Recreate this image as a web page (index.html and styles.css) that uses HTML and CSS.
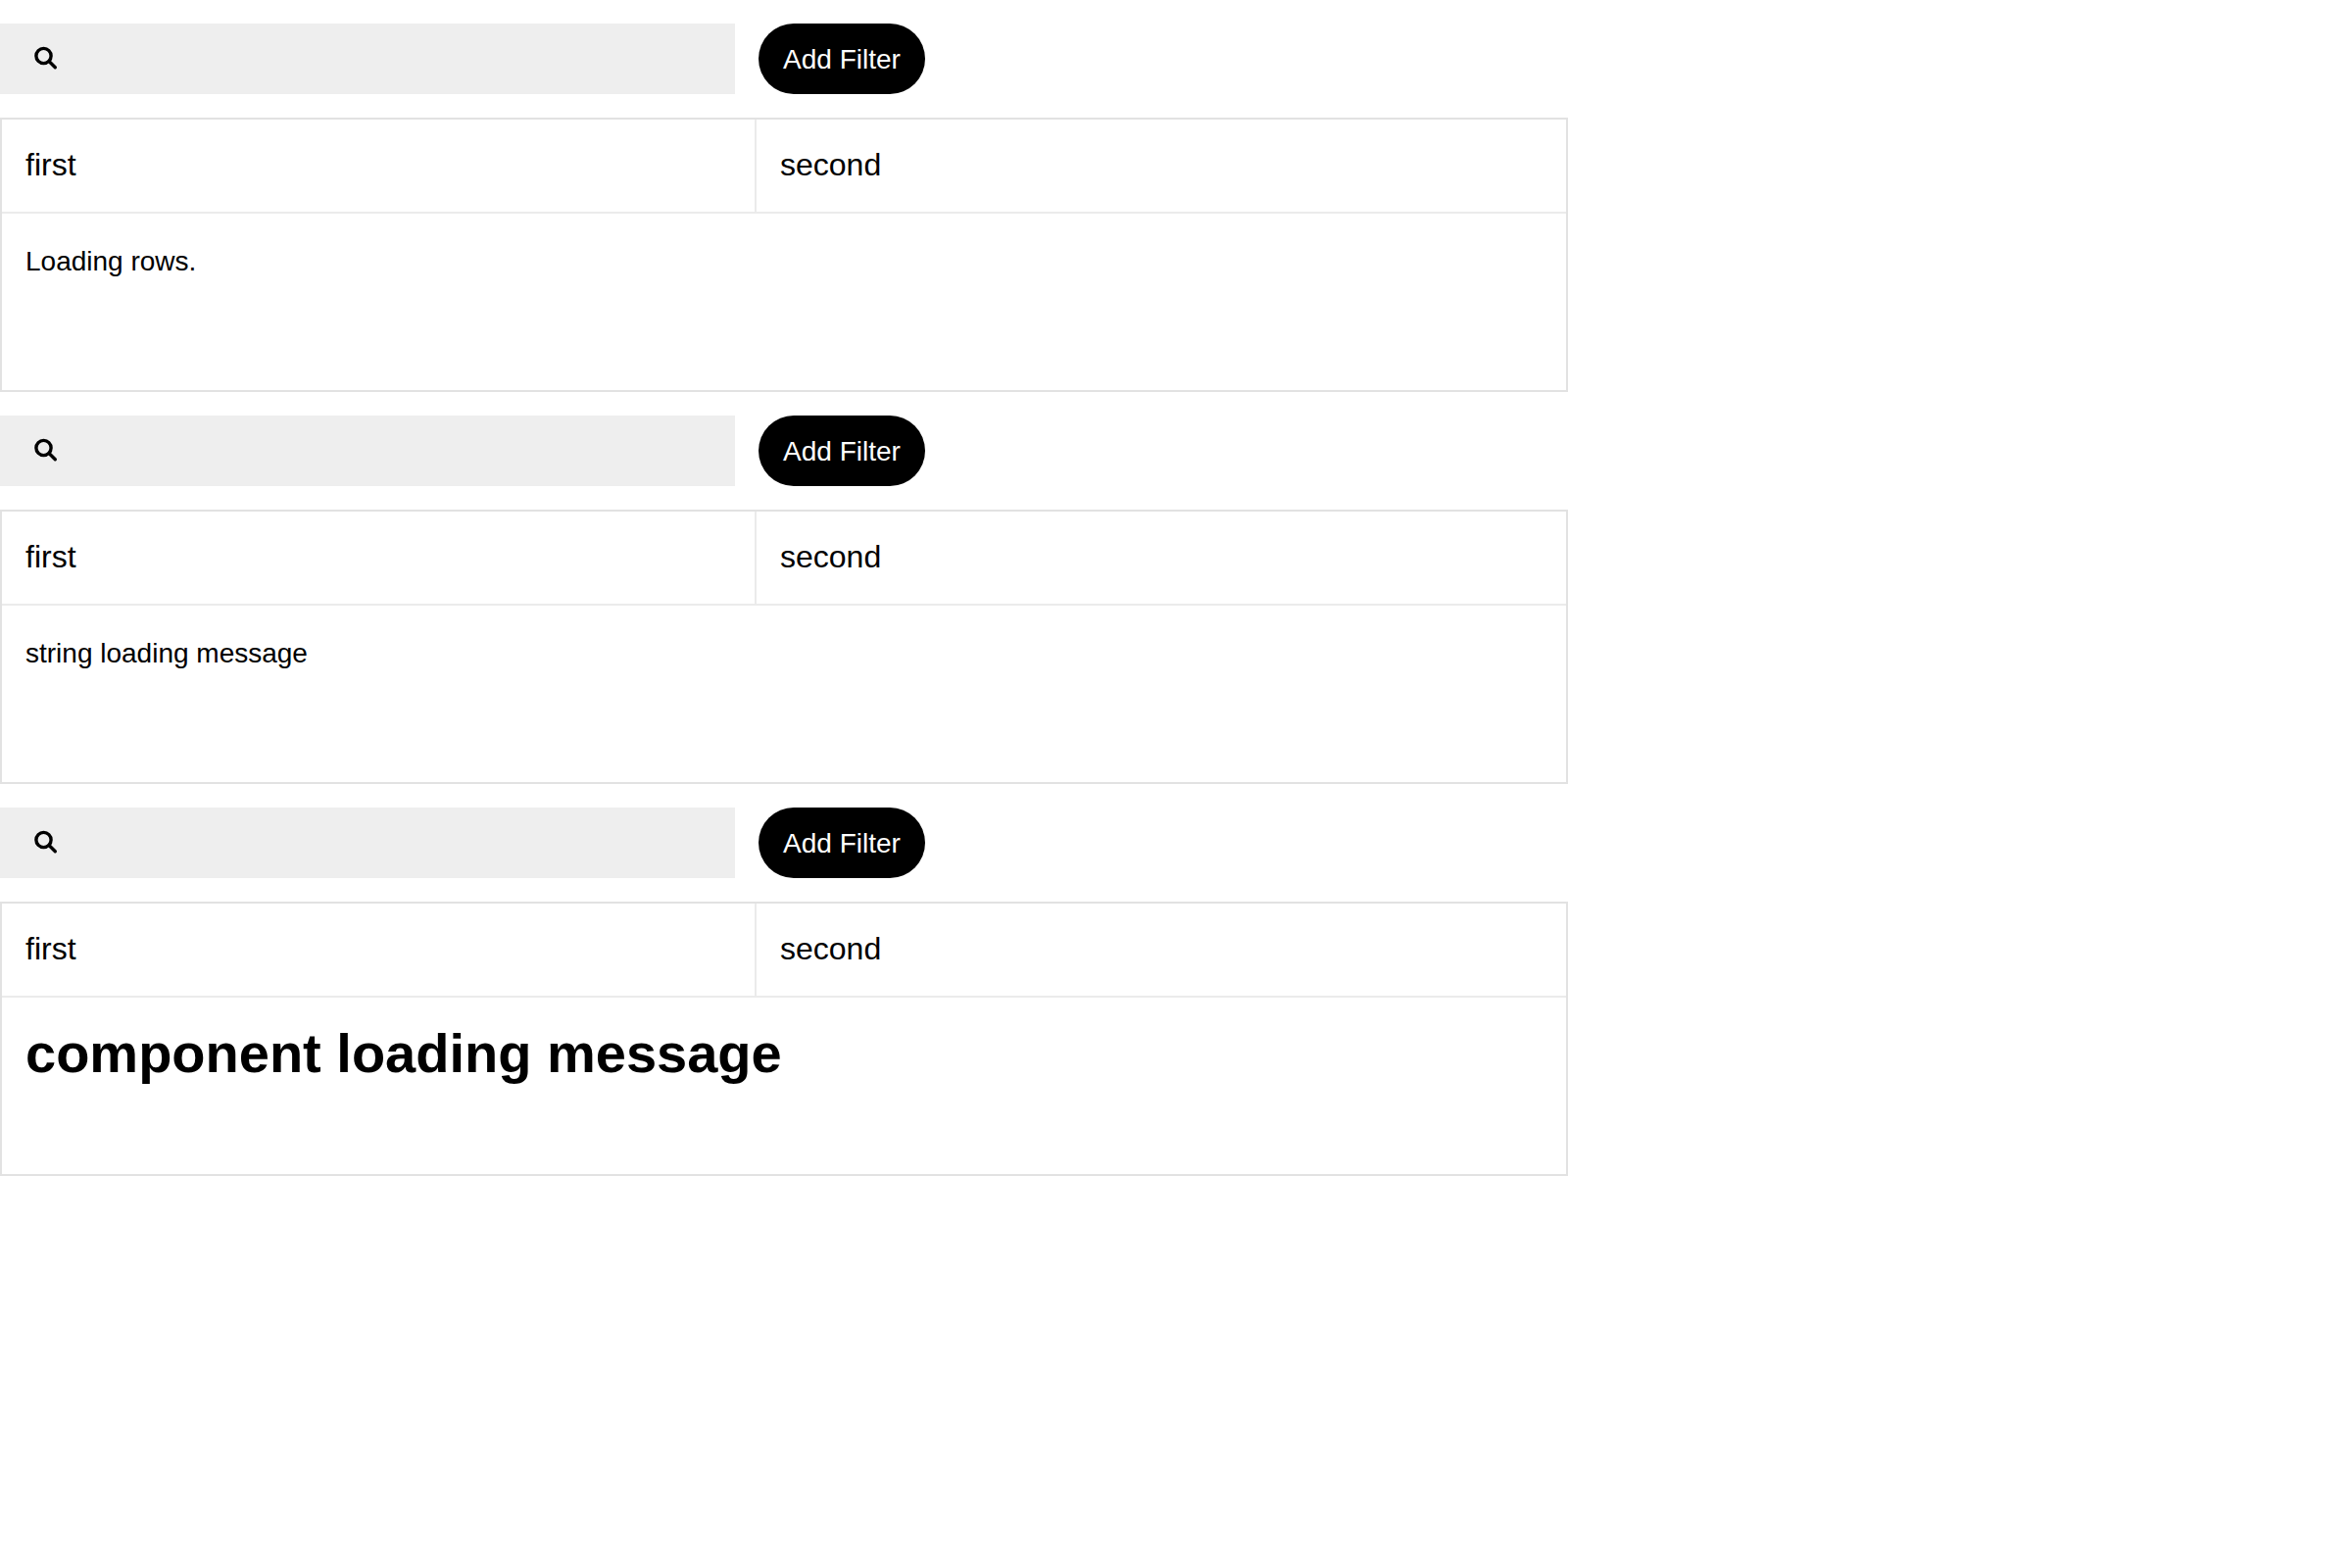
FILE: index.html
```html
<!DOCTYPE html>
<html lang="en">
<head>
  <meta charset="utf-8">
  <title>Data table loading states</title>
  <link rel="stylesheet" href="styles.css">
</head>
<body>
  <main class="page">
    <section class="panel">
      <div class="toolbar">
        <label class="search">
          <svg class="search-icon" viewBox="0 0 32 32" aria-hidden="true"><circle cx="16.5" cy="13" r="7.6"/><path d="M22 18.5 28.3 24.8"/></svg>
          <input class="search-input" type="text" aria-label="Search by text">
        </label>
        <button class="filter-button" type="button">Add Filter</button>
      </div>
      <table class="data-table">
        <thead><tr><th class="head-cell head-first" scope="col">first</th><th class="head-cell" scope="col">second</th></tr></thead>
        <tbody><tr><td class="message-cell" colspan="2">Loading rows.</td></tr></tbody>
      </table>
    </section>
    <section class="panel">
      <div class="toolbar">
        <label class="search">
          <svg class="search-icon" viewBox="0 0 32 32" aria-hidden="true"><circle cx="16.5" cy="13" r="7.6"/><path d="M22 18.5 28.3 24.8"/></svg>
          <input class="search-input" type="text" aria-label="Search by text">
        </label>
        <button class="filter-button" type="button">Add Filter</button>
      </div>
      <table class="data-table">
        <thead><tr><th class="head-cell head-first" scope="col">first</th><th class="head-cell" scope="col">second</th></tr></thead>
        <tbody><tr><td class="message-cell" colspan="2">string loading message</td></tr></tbody>
      </table>
    </section>
    <section class="panel">
      <div class="toolbar">
        <label class="search">
          <svg class="search-icon" viewBox="0 0 32 32" aria-hidden="true"><circle cx="16.5" cy="13" r="7.6"/><path d="M22 18.5 28.3 24.8"/></svg>
          <input class="search-input" type="text" aria-label="Search by text">
        </label>
        <button class="filter-button" type="button">Add Filter</button>
      </div>
      <table class="data-table">
        <thead><tr><th class="head-cell head-first" scope="col">first</th><th class="head-cell" scope="col">second</th></tr></thead>
        <tbody><tr><td class="message-cell" colspan="2"><h1 class="message-title">component loading message</h1></td></tr></tbody>
      </table>
    </section>
  </main>
</body>
</html>
```
FILE: styles.css
```css
* {
  box-sizing: border-box;
}

body {
  margin: 0;
  background: #fff;
  color: #000;
  font-family: "Liberation Sans", Arial, sans-serif;
  font-size: 28px;
  line-height: 50px;
}

.page {
  max-width: 1600px;
}

.toolbar {
  display: flex;
  gap: 24px;
  padding: 24px 0;
}

.search {
  display: flex;
  flex: 0 1 750px;
  align-items: center;
  gap: 16px;
  min-width: 0;
  padding: 0 28px;
  background: #eee;
}

.search-icon {
  flex: none;
  width: 32px;
  height: 32px;
  fill: none;
  stroke: #000;
  stroke-width: 3.4;
  stroke-linecap: round;
}

.search-input {
  flex: 1;
  min-width: 0;
  height: 72px;
  padding: 0;
  border: 0;
  outline: 0;
  background: transparent;
  font: inherit;
}

.filter-button {
  flex: none;
  min-width: 170px;
  padding: 12px 24px 10px;
  border: 0;
  border-radius: 36px;
  background: #000;
  color: #fff;
  font: inherit;
}

.data-table {
  width: 100%;
  border: 2px solid #e2e2e2;
  border-collapse: separate;
  border-spacing: 0;
  table-layout: fixed;
}

.head-cell {
  height: 96px;
  padding: 24px;
  border-bottom: 2px solid #ebebeb;
  font-size: 32px;
  font-weight: 400;
  line-height: 44px;
  text-align: left;
  vertical-align: top;
}

.head-first {
  width: 770px;
  border-right: 2px solid #ebebeb;
}

.message-cell {
  height: 180px;
  padding: 24px;
  vertical-align: top;
}

.message-title {
  margin: 0;
  font-size: 56px;
  line-height: 66px;
}
```
